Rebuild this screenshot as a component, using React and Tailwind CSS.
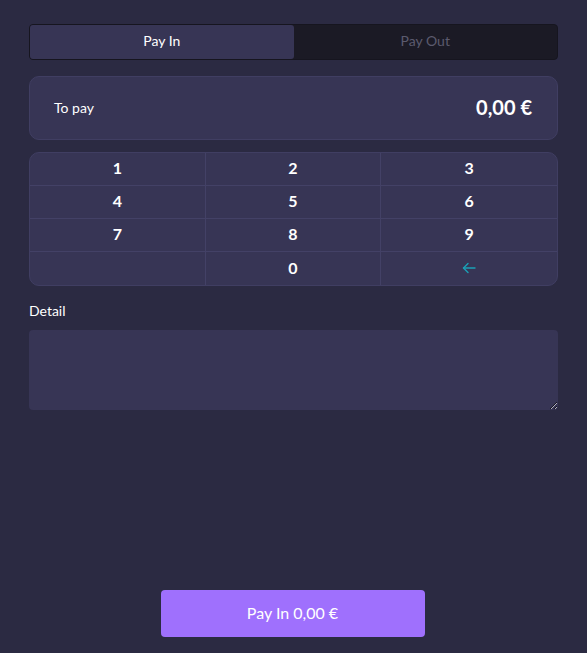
import React, { useState } from 'react';

const keys = ['1', '2', '3', '4', '5', '6', '7', '8', '9', '', '0', 'back'];

const App = () => {
  const [tab, setTab] = useState('in');
  const [amount, setAmount] = useState('0,00');

  return (
    <div
      className="h-[653px] w-full bg-[#2b2a42] px-[29px] pt-[24px] pb-[16px] flex flex-col text-white"
      style={{ fontFamily: 'Lato, "Open Sans", sans-serif' }}
    >
      <div className="flex h-[36px] rounded-[4px] bg-[#1b1a25] border border-[#16151f]">
        <button
          className={`flex-1 text-[14px] rounded-[3px] pb-[3px] ${tab === 'in' ? 'bg-[#373555] text-white' : 'text-[#5b5a6e]'}`}
          onClick={() => setTab('in')}
        >
          Pay In
        </button>
        <button
          className={`flex-1 text-[14px] rounded-[3px] pb-[3px] ${tab === 'out' ? 'bg-[#373555] text-white' : 'text-[#5b5a6e]'}`}
          onClick={() => setTab('out')}
        >
          Pay Out
        </button>
      </div>

      <div className="mt-[16px] h-[64px] rounded-[10px] bg-[#373555] border border-[#403e62] flex items-center justify-between pl-[24px] pr-[25px] pb-[2px]">
        <span className="text-[14px]">To pay</span>
        <span className="text-[20px] font-bold">{amount} €</span>
      </div>

      <div className="mt-[12px] rounded-[10px] bg-[#373555] border border-[#403e62] grid grid-cols-3 overflow-hidden">
        {keys.map((k, i) => (
          <button
            key={i}
            className={`h-[33px] flex items-center justify-center text-[16px] font-bold pb-[2px] border-[#434166] ${i % 3 !== 2 ? 'border-r' : ''} ${i < 9 ? 'border-b' : ''}`}
            onClick={() => k === 'back' && setAmount('0,00')}
          >
            {k === 'back' ? (
              <svg width="14" height="12" viewBox="0 0 14 12" fill="none" stroke="#1ba0b5" strokeWidth="1.4" strokeLinecap="round" strokeLinejoin="round">
                <path d="M13 6H1.5" />
                <path d="M6 1.5L1.5 6L6 10.5" />
              </svg>
            ) : (
              k
            )}
          </button>
        ))}
      </div>

      <label className="mt-[15px] text-[14px] leading-[20px]">Detail</label>
      <textarea className="mt-[9px] h-[80px] rounded-[4px] bg-[#373555] outline-none p-2 text-[14px]" />

      <div className="flex-1" />

      <div className="flex justify-center">
        <button className="w-[264px] h-[47px] rounded-[4px] bg-[#9f70fd] text-[16px] pb-[2px] -translate-x-[1px]">
          Pay In {amount} €
        </button>
      </div>
    </div>
  );
};

export default App;
